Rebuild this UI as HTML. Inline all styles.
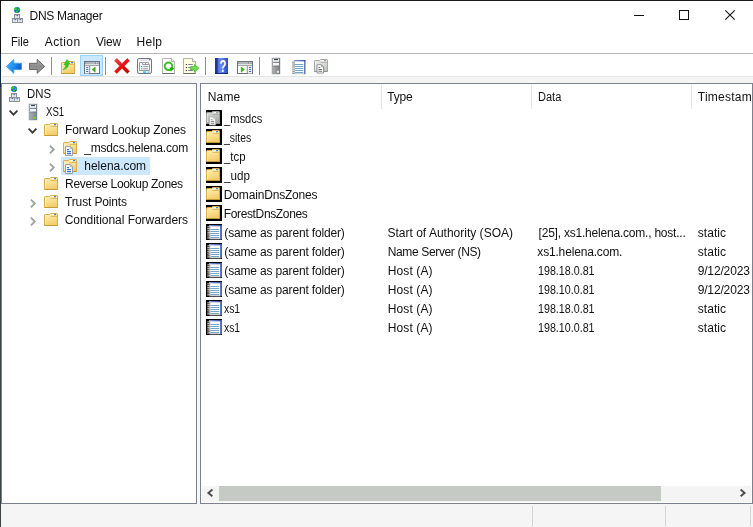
<!DOCTYPE html>
<html>
<head>
<meta charset="utf-8">
<title>DNS Manager</title>
<style>
html,body{margin:0;padding:0;}
body{width:753px;height:527px;overflow:hidden;background:#fff;position:relative;font-family:"Liberation Sans",sans-serif;font-size:12px;color:#000;}
.abs{position:absolute;}
.t{transform-origin:0 50%;position:absolute;white-space:nowrap;line-height:16px;height:16px;font-size:12px;color:#111;}
svg{position:absolute;overflow:visible;}
#edgeL{left:0;top:0;width:1px;height:527px;background:linear-gradient(#111 0,#111 54px,#0c2c48 54px,#0c2c48 87px,#3c423c 87px,#3c423c 100%);}
#edgeT{left:0;top:0;width:753px;height:1px;background:#1a1a1a;}
#menuline{left:1px;top:53px;width:752px;height:1px;background:#b4b7b4;}
#tbstrip{left:2px;top:76px;width:751px;height:7px;background:#f5f5f5;border-top:1px solid #e2e6e2;box-sizing:border-box;}
#lpane{left:1px;top:83px;width:196px;height:421px;border:1px solid #7c8190;box-sizing:border-box;background:#fff;}
#split{left:197px;top:83px;width:3px;height:421px;background:#f7f7f7;}
#rpane{left:200px;top:83px;width:553px;height:421px;border:1px solid #7c8190;box-sizing:border-box;background:#fff;}
#status{left:1px;top:504px;width:752px;height:23px;background:#f5f5f5;}
.ssep{top:506px;width:1px;height:20px;background:#d3d7d3;}
.hsep{top:85px;width:1px;height:24px;background:#e5e5e5;}
#hscroll{left:202px;top:486px;width:549px;height:16px;background:#f4f4f4;}
#thumb{left:219px;top:486px;width:442px;height:15px;background:#c6cac4;}
#sel{left:61px;top:157px;width:89px;height:18px;background:#cce8ff;}
#tbsel{left:80px;top:55px;width:23px;height:21px;background:#cce8ff;border:1px solid #99d1ff;box-sizing:border-box;}
.tsep{top:57px;width:1px;height:18px;background:#8e8e8e;}
#tx{position:absolute;left:0;top:0;width:753px;height:527px;will-change:transform;}
</style>
</head>
<body>
<div class="abs" id="menuline"></div>
<div class="abs" id="tbstrip"></div>
<div class="abs" id="lpane"></div>
<div class="abs" id="split"></div>
<div class="abs" id="rpane"></div>
<div class="abs" id="status"></div>
<div class="abs ssep" style="left:532px"></div>
<div class="abs ssep" style="left:665px"></div>
<div class="abs ssep" style="left:750px"></div>
<div class="abs" id="hscroll"></div>
<div class="abs" id="thumb"></div>
<div class="abs" id="edgeT"></div>
<div class="abs" id="edgeL"></div>
<div class="abs" id="tbsel"></div>
<div class="abs tsep" style="left:51px"></div>
<div class="abs tsep" style="left:105px"></div>
<div class="abs tsep" style="left:205px"></div>
<div class="abs tsep" style="left:259px"></div>
<div class="abs" id="sel"></div>
<div class="abs hsep" style="left:381px"></div>
<div class="abs hsep" style="left:531px"></div>
<div class="abs hsep" style="left:691px"></div>
<svg width="0" height="0" style="left:0;top:0"><defs>
<linearGradient id="gFold" x1="0" y1="0" x2="0.3" y2="1"><stop offset="0" stop-color="#fdefba"/><stop offset="0.5" stop-color="#fbe193"/><stop offset="1" stop-color="#f3cd6c"/></linearGradient>
<linearGradient id="gGFold" x1="0" y1="0" x2="0.3" y2="1"><stop offset="0" stop-color="#f0f1f0"/><stop offset="0.5" stop-color="#dcdfdc"/><stop offset="1" stop-color="#c0c4c0"/></linearGradient>
<linearGradient id="gGFold2" x1="0" y1="0" x2="0.3" y2="1"><stop offset="0" stop-color="#dcdfdc"/><stop offset="0.5" stop-color="#c2c6c2"/><stop offset="1" stop-color="#a6aaa6"/></linearGradient>
<linearGradient id="gBack" x1="0" y1="0.2" x2="1" y2="0.6"><stop offset="0" stop-color="#4cb4ff"/><stop offset="0.55" stop-color="#1c8cec"/><stop offset="1" stop-color="#0a58c0"/></linearGradient>
<linearGradient id="gFwd" x1="0" y1="0" x2="0" y2="1"><stop offset="0" stop-color="#acacac"/><stop offset="0.5" stop-color="#8c8c8c"/><stop offset="1" stop-color="#a0a0a0"/></linearGradient>
<linearGradient id="gSrv" x1="0" y1="0" x2="1" y2="0"><stop offset="0" stop-color="#a9b4bb"/><stop offset="0.5" stop-color="#8f9ca5"/><stop offset="1" stop-color="#76848e"/></linearGradient>
<linearGradient id="gSrvG" x1="0" y1="0" x2="1" y2="0"><stop offset="0" stop-color="#b4b4b4"/><stop offset="0.5" stop-color="#989898"/><stop offset="1" stop-color="#7c7c7c"/></linearGradient>
<radialGradient id="gGlobe" cx="0.4" cy="0.35" r="0.7"><stop offset="0" stop-color="#3c8cf8"/><stop offset="1" stop-color="#1030c0"/></radialGradient>
<linearGradient id="gHelp" x1="0" y1="0" x2="1" y2="0"><stop offset="0" stop-color="#3858d0"/><stop offset="0.45" stop-color="#6888ee"/><stop offset="1" stop-color="#2848c0"/></linearGradient>
<linearGradient id="gRed" x1="0" y1="0" x2="1" y2="1"><stop offset="0" stop-color="#f04848"/><stop offset="0.5" stop-color="#e81010"/><stop offset="1" stop-color="#b80000"/></linearGradient>
<linearGradient id="gNbTop" x1="0" y1="0" x2="1" y2="0"><stop offset="0" stop-color="#8098d0"/><stop offset="1" stop-color="#3450a8"/></linearGradient>
</defs></svg>
<svg style="left:12px;top:7px" width="11" height="16" viewBox="0 0 11 16" ><circle cx="5" cy="2.95" r="3" fill="url(#gGlobe)"/><path d="M2.4,1.6 Q3.4,0.1 5,0.3 Q5.4,1.6 4.4,2.6 Q3.4,3.4 2.2,3 Q2,2.2 2.4,1.6 Z" fill="#24dc24"/><path d="M6,1.4 Q7.6,1.4 7.9,3 Q7.4,4.2 6.4,3.8 Q5.6,2.6 6,1.4 Z" fill="#24dc24"/><path d="M3.6,4 Q5.2,3.4 6.2,4.6 Q5.8,5.9 4.6,5.9 Q3.6,5.4 3.6,4 Z" fill="#24dc24"/><rect x="2.5" y="7.5" width="5" height="4" fill="#fff" stroke="#8c9098" stroke-width="1"/><rect x="3" y="8" width="4" height="1.4" fill="#c8ccd4"/><rect x="4.6" y="8" width="1.2" height="1.2" fill="#3c64c0"/><rect x="3.5" y="10" width="3" height="0.7" fill="#c4c8cc"/><rect x="0.5" y="11.5" width="5" height="4" fill="#fff" stroke="#8c9098" stroke-width="1"/><rect x="1" y="12" width="4" height="1.4" fill="#c8ccd4"/><rect x="2.6" y="12" width="1.2" height="1.2" fill="#3c64c0"/><rect x="1.5" y="14" width="3" height="0.7" fill="#c4c8cc"/><rect x="5.5" y="11.5" width="5" height="4" fill="#fff" stroke="#8c9098" stroke-width="1"/><rect x="6" y="12" width="4" height="1.4" fill="#c8ccd4"/><rect x="7.6" y="12" width="1.2" height="1.2" fill="#3c64c0"/><rect x="6.5" y="14" width="3" height="0.7" fill="#c4c8cc"/></svg>
<svg style="left:9px;top:86px" width="11" height="16" viewBox="0 0 11 16" ><circle cx="5" cy="2.95" r="3" fill="url(#gGlobe)"/><path d="M2.4,1.6 Q3.4,0.1 5,0.3 Q5.4,1.6 4.4,2.6 Q3.4,3.4 2.2,3 Q2,2.2 2.4,1.6 Z" fill="#24dc24"/><path d="M6,1.4 Q7.6,1.4 7.9,3 Q7.4,4.2 6.4,3.8 Q5.6,2.6 6,1.4 Z" fill="#24dc24"/><path d="M3.6,4 Q5.2,3.4 6.2,4.6 Q5.8,5.9 4.6,5.9 Q3.6,5.4 3.6,4 Z" fill="#24dc24"/><rect x="2.5" y="7.5" width="5" height="4" fill="#fff" stroke="#8c9098" stroke-width="1"/><rect x="3" y="8" width="4" height="1.4" fill="#c8ccd4"/><rect x="4.6" y="8" width="1.2" height="1.2" fill="#3c64c0"/><rect x="3.5" y="10" width="3" height="0.7" fill="#c4c8cc"/><rect x="0.5" y="11.5" width="5" height="4" fill="#fff" stroke="#8c9098" stroke-width="1"/><rect x="1" y="12" width="4" height="1.4" fill="#c8ccd4"/><rect x="2.6" y="12" width="1.2" height="1.2" fill="#3c64c0"/><rect x="1.5" y="14" width="3" height="0.7" fill="#c4c8cc"/><rect x="5.5" y="11.5" width="5" height="4" fill="#fff" stroke="#8c9098" stroke-width="1"/><rect x="6" y="12" width="4" height="1.4" fill="#c8ccd4"/><rect x="7.6" y="12" width="1.2" height="1.2" fill="#3c64c0"/><rect x="6.5" y="14" width="3" height="0.7" fill="#c4c8cc"/></svg>
<svg style="left:634px;top:15px" width="10" height="1" viewBox="0 0 10 1" ><rect x="0" y="0" width="10" height="1" fill="#111"/></svg>
<svg style="left:679px;top:10px" width="10" height="10" viewBox="0 0 10 10" ><rect x="0.5" y="0.5" width="9" height="9" fill="none" stroke="#111" stroke-width="1"/></svg>
<svg style="left:725px;top:10px" width="10" height="10" viewBox="0 0 10 10" ><path d="M0.3,0.3 L9.7,9.7 M9.7,0.3 L0.3,9.7" stroke="#111" stroke-width="1.1" fill="none"/></svg>
<svg style="left:6px;top:59px" width="16" height="15" viewBox="0 0 16 15" ><path d="M0.4,7.4 L7.8,0.5 L7.8,4.3 L15.5,4.3 L15.5,10.5 L7.8,10.5 L7.8,14.3 Z" fill="url(#gBack)" stroke="#3c9cec" stroke-width="0.9" stroke-linejoin="round"/></svg>
<svg style="left:29px;top:59px" width="16" height="15" viewBox="0 0 16 15" ><path d="M15.6,7.4 L8.2,0.5 L8.2,4.3 L0.5,4.3 L0.5,10.5 L8.2,10.5 L8.2,14.3 Z" fill="url(#gFwd)" stroke="#5c5c5c" stroke-width="0.9" stroke-linejoin="round"/></svg>
<svg style="left:61px;top:60px" width="14" height="14" viewBox="0 0 14 14" ><g transform="translate(0,1)"><path d="M0.5,2.2 Q0.5,1.5 1.2,1.5 L5.6,1.5 L6.6,0.5 L12.8,0.5 Q13.5,0.5 13.5,1.2 L13.5,12.5 L0.5,12.5 Z" fill="url(#gFold)" stroke="#d6ad48" stroke-width="1"/><path d="M6.6,3.5 L13,3.5" stroke="#d6ad48" stroke-width="1" opacity="0.75" fill="none"/><path d="M1.5,3 L1.5,11.5" stroke="#fff" stroke-width="1" opacity="0.45" fill="none"/><path d="M0.5,12.5 L13.5,12.5" stroke="#c39a36" stroke-width="1" fill="none"/><rect x="7.7" y="1" width="2.4" height="1.2" fill="#fff"/><rect x="10.1" y="1" width="1.9" height="1.2" fill="#2c7fe0"/><path d="M1.8,8.8 Q4.8,7.4 4.9,3.4 L3,3.8 L6,-1.6 L9,2.4 L7.4,2.6 Q7.8,7.6 1.8,8.8 Z" fill="#34cc20" stroke="#1ca010" stroke-width="0.5" stroke-linejoin="round"/></g></svg>
<svg style="left:84px;top:61px" width="16" height="13" viewBox="0 0 16 13" ><rect x="0.5" y="0.5" width="15" height="12" fill="#fff" stroke="#6f747c" stroke-width="1"/><rect x="1" y="1" width="14" height="2.2" fill="#8a8f98"/><rect x="1.6" y="1.5" width="9.5" height="0.9" fill="#e4e6ea"/><rect x="12" y="1.4" width="1" height="1" fill="#fff"/><rect x="13.6" y="1.4" width="1" height="1" fill="#fff"/><rect x="1" y="3.2" width="14" height="1" fill="#dfe2e6"/><rect x="1" y="4.2" width="14" height="0.8" fill="#8a8f98"/><rect x="5.2" y="5" width="1" height="7.5" fill="#6f747c"/><rect x="1" y="5" width="4.2" height="7.5" fill="#eef0f3"/><rect x="2.2" y="6" width="2" height="1" fill="#2f6fd0"/><rect x="2.2" y="8" width="2" height="1" fill="#2f6fd0"/><rect x="2.2" y="10" width="2" height="1" fill="#2f6fd0"/><path d="M11.2,6 L8,8.6 L11.2,11.2 Z" fill="#3cb418" stroke="#2c9410" stroke-width="0.5"/></svg>
<svg style="left:114px;top:58px" width="16" height="16" viewBox="0 0 16 16" ><path d="M0.5,2.8 L2.8,0.5 L8,5.7 L13.2,0.5 L15.5,2.8 L10.3,8 L15.5,13.2 L13.2,15.5 L8,10.3 L2.8,15.5 L0.5,13.2 L5.7,8 Z" fill="url(#gRed)" stroke="#c41010" stroke-width="0.5" stroke-linejoin="round"/></svg>
<svg style="left:137px;top:58px" width="15" height="16" viewBox="0 0 15 16" ><rect x="0.5" y="0.5" width="14" height="15" rx="1.6" fill="#fff" stroke="#70757e" stroke-width="1"/><rect x="1.2" y="1.2" width="12.6" height="1.6" fill="#dfe3e8"/><rect x="12.2" y="1" width="1.2" height="1.2" fill="#3858a8"/><path d="M2.5,12.5 L2.5,4.5 L5.5,4.5 L5.5,6.5 L12.5,6.5 L12.5,12.5 Z" fill="#f4f6f8" stroke="#8a9098" stroke-width="0.9"/><path d="M5.5,4.5 L8.5,4.5 L8.5,6.5 M8.5,4.5 L11.5,4.5 L11.5,6.5" fill="none" stroke="#8a9098" stroke-width="0.8"/><rect x="4" y="8" width="1.2" height="1.2" fill="#1e90ff"/><rect x="6.2" y="8.2" width="5" height="0.9" fill="#8a9098"/><rect x="4" y="10.2" width="1.2" height="1.2" fill="#8a9098"/><rect x="6.2" y="10.4" width="5" height="0.9" fill="#8a9098"/><rect x="6" y="13.4" width="3.2" height="1.4" fill="#18b8f0"/><rect x="10.2" y="13.4" width="3" height="1.4" fill="#b4b8bc"/></svg>
<svg style="left:162px;top:58px" width="13" height="16" viewBox="0 0 13 16" ><path d="M0.5,0.5 L9.5,0.5 L12.5,3.5 L12.5,15.5 L0.5,15.5 Z" fill="#fff" stroke="#b4b4b4" stroke-width="1"/><path d="M9.5,0.5 L9.5,3.5 L12.5,3.5" fill="#f0f0f0" stroke="#9c9c9c" stroke-width="0.8"/><path d="M0.5,15.5 L12.5,15.5" stroke="#6c6c6c" stroke-width="1"/><circle cx="6.5" cy="8.3" r="3.75" fill="none" stroke="#34c41c" stroke-width="2"/><path d="M6.5,8.3 L9.4,8.6 L8,11 Z" fill="#fff"/><path d="M7.6,9.2 L12.4,10.4 L8.8,13.4 Z" fill="#18a808"/></svg>
<svg style="left:183px;top:58px" width="16" height="16" viewBox="0 0 16 16" ><path d="M0.5,0.5 L9.5,0.5 L12.5,3.5 L12.5,15.5 L0.5,15.5 Z" fill="#fffbe0" stroke="#b4b4a8" stroke-width="1"/><path d="M9.5,0.5 L9.5,3.5 L12.5,3.5" fill="#f6f6f0" stroke="#9c9c9c" stroke-width="0.8"/><path d="M0.5,15.5 L12.5,15.5" stroke="#6c6c64" stroke-width="1"/><rect x="2.8" y="6" width="1.1" height="1.1" fill="#303030"/><rect x="5.2" y="6.2" width="4.6" height="0.8" fill="#5c5c98"/><rect x="2.8" y="9" width="1.1" height="1.1" fill="#303030"/><rect x="5.2" y="9.2" width="4.6" height="0.8" fill="#5c5c98"/><rect x="2.8" y="12" width="1.1" height="1.1" fill="#303030"/><rect x="5.2" y="12.2" width="4.6" height="0.8" fill="#5c5c98"/><path d="M7.6,8.6 L11.4,8.6 L11.4,6.3 L16,10.3 L11.4,14.3 L11.4,12 L7.6,12 Z" fill="#6cdc50" stroke="#2cb01c" stroke-width="0.6"/></svg>
<svg style="left:215px;top:58px" width="13" height="16" viewBox="0 0 13 16" ><rect x="0" y="0" width="13" height="16" fill="url(#gHelp)"/><rect x="0" y="0" width="2.6" height="16" fill="#1c3494"/><rect x="0" y="15" width="13" height="1" fill="#182c84"/><text transform="translate(8,13.8) scale(0.8,1.18)" x="0" y="0" font-family="Liberation Sans, sans-serif" font-weight="bold" font-size="14" fill="#fff" text-anchor="middle">?</text></svg>
<svg style="left:237px;top:61px" width="16" height="13" viewBox="0 0 16 13" ><rect x="0.5" y="0.5" width="15" height="12" fill="#fff" stroke="#6f747c" stroke-width="1"/><rect x="1" y="1" width="14" height="2.2" fill="#8a8f98"/><rect x="1.6" y="1.5" width="9.5" height="0.9" fill="#e4e6ea"/><rect x="12" y="1.4" width="1" height="1" fill="#fff"/><rect x="13.6" y="1.4" width="1" height="1" fill="#fff"/><rect x="1" y="3.2" width="14" height="1" fill="#dfe2e6"/><rect x="1" y="4.2" width="14" height="0.8" fill="#8a8f98"/><rect x="9.8" y="5" width="1" height="7.5" fill="#6f747c"/><rect x="10.8" y="5" width="4.2" height="7.5" fill="#eef0f3"/><rect x="12" y="6" width="2" height="1" fill="#2f6fd0"/><rect x="12" y="8" width="2" height="1" fill="#2f6fd0"/><rect x="12" y="10" width="2" height="1" fill="#2f6fd0"/><path d="M4.2,6 L7.4,8.6 L4.2,11.2 Z" fill="#3cb418" stroke="#2c9410" stroke-width="0.5"/></svg>
<svg style="left:272px;top:58px" width="8" height="16" viewBox="0 0 8 16" ><rect x="0" y="0" width="8" height="16" fill="url(#gSrvG)"/><rect x="0" y="0" width="8" height="16" fill="none" stroke="#6c7a84" stroke-width="0.6" opacity="0.6"/><rect x="1" y="0.8" width="6" height="3" fill="#eef2f4"/><rect x="2" y="1.1" width="4" height="1" fill="#24343e"/><rect x="1" y="5" width="6" height="2.4" fill="#f2f5f7"/><rect x="0.5" y="4.1" width="7" height="0.6" fill="#6a7882" opacity="0.7"/><rect x="0.5" y="8" width="7" height="0.6" fill="#6a7882" opacity="0.7"/><rect x="5" y="12.8" width="2" height="2" fill="#e8e8e8"/></svg>
<svg style="left:291.2px;top:58.5px" width="16" height="16" viewBox="0 0 16 16" ><g transform="scale(0.93,1)"><g transform="translate(0,0)"><rect x="3.3" y="1" width="12.2" height="14.2" fill="#fdfdfd"/><rect x="3.3" y="1" width="12.2" height="1.3" fill="url(#gNbTop)"/><rect x="14.2" y="1" width="1.3" height="14.2" fill="#3a56a8"/><rect x="3.3" y="14.4" width="10.8" height="0.8" fill="#b8b8b8"/><rect x="4.4" y="5" width="8.8" height="1" fill="#6fa6cc"/><rect x="4.4" y="7" width="8.8" height="1" fill="#6fa6cc"/><rect x="4.4" y="9" width="8.8" height="1" fill="#6fa6cc"/><rect x="4.4" y="11" width="8.8" height="1" fill="#6fa6cc"/><rect x="4.4" y="13" width="8.8" height="1" fill="#6fa6cc"/><rect x="1.2" y="2.2" width="3.2" height="1.15" rx="0.55" fill="#bdbdbd"/><rect x="1.2" y="3.35" width="3.2" height="0.45" rx="0.2" fill="#707070"/><rect x="1.2" y="4.05" width="3.2" height="1.15" rx="0.55" fill="#bdbdbd"/><rect x="1.2" y="5.2" width="3.2" height="0.45" rx="0.2" fill="#707070"/><rect x="1.2" y="5.9" width="3.2" height="1.15" rx="0.55" fill="#bdbdbd"/><rect x="1.2" y="7.05" width="3.2" height="0.45" rx="0.2" fill="#707070"/><rect x="1.2" y="7.75" width="3.2" height="1.15" rx="0.55" fill="#bdbdbd"/><rect x="1.2" y="8.9" width="3.2" height="0.45" rx="0.2" fill="#707070"/><rect x="1.2" y="9.6" width="3.2" height="1.15" rx="0.55" fill="#bdbdbd"/><rect x="1.2" y="10.75" width="3.2" height="0.45" rx="0.2" fill="#707070"/><rect x="1.2" y="11.45" width="3.2" height="1.15" rx="0.55" fill="#bdbdbd"/><rect x="1.2" y="12.6" width="3.2" height="0.45" rx="0.2" fill="#707070"/><rect x="1.2" y="13.3" width="3.2" height="1.15" rx="0.55" fill="#bdbdbd"/><rect x="1.2" y="14.45" width="3.2" height="0.45" rx="0.2" fill="#707070"/></g></g></svg>
<svg style="left:314px;top:59px" width="15" height="15" viewBox="0 0 15 15" ><path d="M0.5,2.2 Q0.5,1.5 1.2,1.5 L5.6,1.5 L6.6,0.5 L12.8,0.5 Q13.5,0.5 13.5,1.2 L13.5,12.5 L0.5,12.5 Z" fill="url(#gGFold)" stroke="#a4a8a4" stroke-width="1"/><path d="M6.6,3.5 L13,3.5" stroke="#a4a8a4" stroke-width="1" opacity="0.75" fill="none"/><path d="M1.5,3 L1.5,11.5" stroke="#fff" stroke-width="1" opacity="0.45" fill="none"/><path d="M0.5,12.5 L13.5,12.5" stroke="#8c908c" stroke-width="1" fill="none"/><rect x="7.7" y="1" width="2.4" height="1.2" fill="#fff"/><rect x="10.1" y="1" width="1.9" height="1.2" fill="#9a9e9a"/><g transform="translate(2.6,5.3) scale(0.92,0.92)"><g transform="translate(0,0)"><path d="M0.5,0.5 L5.3,0.5 L7.5,2.7 L7.5,9.5 L0.5,9.5 Z" fill="#fff" stroke="#8c8c8c" stroke-width="1"/><path d="M5.3,0.5 L5.3,2.7 L7.5,2.7" fill="none" stroke="#8c8c8c" stroke-width="0.8"/><path d="M2,3.6 L4,3.6 M2,5.6 L6,5.6 M2,7.6 L6,7.6" stroke="#707070" stroke-width="1.1" fill="none"/></g></g></svg>
<svg style="left:9px;top:110px" width="9" height="6" viewBox="0 0 9 6" ><path d="M0.6,0.7 L4.5,4.6 L8.4,0.7" fill="none" stroke="#3c3c3c" stroke-width="1.9"/></svg>
<svg style="left:29px;top:104px" width="8" height="16" viewBox="0 0 8 16" ><rect x="0" y="0" width="8" height="16" fill="url(#gSrv)"/><rect x="0" y="0" width="8" height="16" fill="none" stroke="#6c7a84" stroke-width="0.6" opacity="0.6"/><rect x="1" y="0.8" width="6" height="3" fill="#eef2f4"/><rect x="2" y="1.1" width="4" height="1" fill="#24343e"/><rect x="1" y="5" width="6" height="2.4" fill="#f2f5f7"/><rect x="0.5" y="4.1" width="7" height="0.6" fill="#6a7882" opacity="0.7"/><rect x="0.5" y="8" width="7" height="0.6" fill="#6a7882" opacity="0.7"/><rect x="5" y="12.8" width="2" height="2" fill="#5ce018"/></svg>
<svg style="left:28px;top:128px" width="9" height="6" viewBox="0 0 9 6" ><path d="M0.6,0.7 L4.5,4.6 L8.4,0.7" fill="none" stroke="#3c3c3c" stroke-width="1.9"/></svg>
<svg style="left:44px;top:123px" width="14" height="13" viewBox="0 0 14 13" ><path d="M0.5,2.2 Q0.5,1.5 1.2,1.5 L5.6,1.5 L6.6,0.5 L12.8,0.5 Q13.5,0.5 13.5,1.2 L13.5,12.5 L0.5,12.5 Z" fill="url(#gFold)" stroke="#d6ad48" stroke-width="1"/><path d="M6.6,3.5 L13,3.5" stroke="#d6ad48" stroke-width="1" opacity="0.75" fill="none"/><path d="M1.5,3 L1.5,11.5" stroke="#fff" stroke-width="1" opacity="0.45" fill="none"/><path d="M0.5,12.5 L13.5,12.5" stroke="#c39a36" stroke-width="1" fill="none"/><rect x="7.7" y="1" width="2.4" height="1.2" fill="#fff"/><rect x="10.1" y="1" width="1.9" height="1.2" fill="#2c7fe0"/></svg>
<svg style="left:49px;top:145px" width="6" height="9" viewBox="0 0 6 9" ><path d="M0.9,0.6 L4.8,4.5 L0.9,8.4" fill="none" stroke="#a0a4a0" stroke-width="1.9"/></svg>
<svg style="left:63px;top:141px" width="14" height="15" viewBox="0 0 14 15" ><path d="M0.5,2.2 Q0.5,1.5 1.2,1.5 L5.6,1.5 L6.6,0.5 L12.8,0.5 Q13.5,0.5 13.5,1.2 L13.5,12.5 L0.5,12.5 Z" fill="url(#gFold)" stroke="#d6ad48" stroke-width="1"/><path d="M6.6,3.5 L13,3.5" stroke="#d6ad48" stroke-width="1" opacity="0.75" fill="none"/><path d="M1.5,3 L1.5,11.5" stroke="#fff" stroke-width="1" opacity="0.45" fill="none"/><path d="M0.5,12.5 L13.5,12.5" stroke="#c39a36" stroke-width="1" fill="none"/><rect x="7.7" y="1" width="2.4" height="1.2" fill="#fff"/><rect x="10.1" y="1" width="1.9" height="1.2" fill="#2c7fe0"/><g transform="translate(2,5)"><path d="M0.5,0.5 L5.3,0.5 L7.5,2.7 L7.5,9.5 L0.5,9.5 Z" fill="#fff" stroke="#9a9ea6" stroke-width="1"/><path d="M5.3,0.5 L5.3,2.7 L7.5,2.7" fill="none" stroke="#9a9ea6" stroke-width="0.8"/><path d="M2,3.6 L4,3.6 M2,5.6 L6,5.6 M2,7.6 L6,7.6" stroke="#2f78d8" stroke-width="1.1" fill="none"/></g></svg>
<svg style="left:49px;top:163px" width="6" height="9" viewBox="0 0 6 9" ><path d="M0.9,0.6 L4.8,4.5 L0.9,8.4" fill="none" stroke="#a0a4a0" stroke-width="1.9"/></svg>
<svg style="left:63px;top:159px" width="14" height="15" viewBox="0 0 14 15" ><path d="M0.5,2.2 Q0.5,1.5 1.2,1.5 L5.6,1.5 L6.6,0.5 L12.8,0.5 Q13.5,0.5 13.5,1.2 L13.5,12.5 L0.5,12.5 Z" fill="url(#gFold)" stroke="#d6ad48" stroke-width="1"/><path d="M6.6,3.5 L13,3.5" stroke="#d6ad48" stroke-width="1" opacity="0.75" fill="none"/><path d="M1.5,3 L1.5,11.5" stroke="#fff" stroke-width="1" opacity="0.45" fill="none"/><path d="M0.5,12.5 L13.5,12.5" stroke="#c39a36" stroke-width="1" fill="none"/><rect x="7.7" y="1" width="2.4" height="1.2" fill="#fff"/><rect x="10.1" y="1" width="1.9" height="1.2" fill="#2c7fe0"/><g transform="translate(2,5)"><path d="M0.5,0.5 L5.3,0.5 L7.5,2.7 L7.5,9.5 L0.5,9.5 Z" fill="#fff" stroke="#9a9ea6" stroke-width="1"/><path d="M5.3,0.5 L5.3,2.7 L7.5,2.7" fill="none" stroke="#9a9ea6" stroke-width="0.8"/><path d="M2,3.6 L4,3.6 M2,5.6 L6,5.6 M2,7.6 L6,7.6" stroke="#2f78d8" stroke-width="1.1" fill="none"/></g></svg>
<svg style="left:44px;top:177px" width="14" height="13" viewBox="0 0 14 13" ><path d="M0.5,2.2 Q0.5,1.5 1.2,1.5 L5.6,1.5 L6.6,0.5 L12.8,0.5 Q13.5,0.5 13.5,1.2 L13.5,12.5 L0.5,12.5 Z" fill="url(#gFold)" stroke="#d6ad48" stroke-width="1"/><path d="M6.6,3.5 L13,3.5" stroke="#d6ad48" stroke-width="1" opacity="0.75" fill="none"/><path d="M1.5,3 L1.5,11.5" stroke="#fff" stroke-width="1" opacity="0.45" fill="none"/><path d="M0.5,12.5 L13.5,12.5" stroke="#c39a36" stroke-width="1" fill="none"/><rect x="7.7" y="1" width="2.4" height="1.2" fill="#fff"/><rect x="10.1" y="1" width="1.9" height="1.2" fill="#2c7fe0"/></svg>
<svg style="left:30px;top:199px" width="6" height="9" viewBox="0 0 6 9" ><path d="M0.9,0.6 L4.8,4.5 L0.9,8.4" fill="none" stroke="#a0a4a0" stroke-width="1.9"/></svg>
<svg style="left:44px;top:195px" width="14" height="13" viewBox="0 0 14 13" ><path d="M0.5,2.2 Q0.5,1.5 1.2,1.5 L5.6,1.5 L6.6,0.5 L12.8,0.5 Q13.5,0.5 13.5,1.2 L13.5,12.5 L0.5,12.5 Z" fill="url(#gFold)" stroke="#d6ad48" stroke-width="1"/><path d="M6.6,3.5 L13,3.5" stroke="#d6ad48" stroke-width="1" opacity="0.75" fill="none"/><path d="M1.5,3 L1.5,11.5" stroke="#fff" stroke-width="1" opacity="0.45" fill="none"/><path d="M0.5,12.5 L13.5,12.5" stroke="#c39a36" stroke-width="1" fill="none"/><rect x="7.7" y="1" width="2.4" height="1.2" fill="#fff"/><rect x="10.1" y="1" width="1.9" height="1.2" fill="#2c7fe0"/></svg>
<svg style="left:30px;top:217px" width="6" height="9" viewBox="0 0 6 9" ><path d="M0.9,0.6 L4.8,4.5 L0.9,8.4" fill="none" stroke="#a0a4a0" stroke-width="1.9"/></svg>
<svg style="left:44px;top:213px" width="14" height="13" viewBox="0 0 14 13" ><path d="M0.5,2.2 Q0.5,1.5 1.2,1.5 L5.6,1.5 L6.6,0.5 L12.8,0.5 Q13.5,0.5 13.5,1.2 L13.5,12.5 L0.5,12.5 Z" fill="url(#gFold)" stroke="#d6ad48" stroke-width="1"/><path d="M6.6,3.5 L13,3.5" stroke="#d6ad48" stroke-width="1" opacity="0.75" fill="none"/><path d="M1.5,3 L1.5,11.5" stroke="#fff" stroke-width="1" opacity="0.45" fill="none"/><path d="M0.5,12.5 L13.5,12.5" stroke="#c39a36" stroke-width="1" fill="none"/><rect x="7.7" y="1" width="2.4" height="1.2" fill="#fff"/><rect x="10.1" y="1" width="1.9" height="1.2" fill="#2c7fe0"/></svg>
<svg style="left:206px;top:110px" width="16" height="16" viewBox="0 0 16 16" ><rect x="0" y="0" width="16" height="16" fill="#000"/><g transform="translate(0,1)"><path d="M0.5,2.2 Q0.5,1.5 1.2,1.5 L5.6,1.5 L6.6,0.5 L12.8,0.5 Q13.5,0.5 13.5,1.2 L13.5,12.5 L0.5,12.5 Z" fill="url(#gGFold2)" stroke="#a0a4a0" stroke-width="1"/><path d="M6.6,3.5 L13,3.5" stroke="#a0a4a0" stroke-width="1" opacity="0.75" fill="none"/><path d="M1.5,3 L1.5,11.5" stroke="#fff" stroke-width="1" opacity="0.45" fill="none"/><path d="M0.5,12.5 L13.5,12.5" stroke="#8c908c" stroke-width="1" fill="none"/><rect x="7.7" y="1" width="2.4" height="1.2" fill="#fff"/><rect x="10.1" y="1" width="1.9" height="1.2" fill="#9a9e9a"/></g><g transform="translate(3,6.6) scale(0.88,0.88)"><g transform="translate(0,0)"><path d="M0.5,0.5 L5.3,0.5 L7.5,2.7 L7.5,9.5 L0.5,9.5 Z" fill="#fff" stroke="#b4b4b4" stroke-width="1"/><path d="M5.3,0.5 L5.3,2.7 L7.5,2.7" fill="none" stroke="#b4b4b4" stroke-width="0.8"/><path d="M2,3.6 L4,3.6 M2,5.6 L6,5.6 M2,7.6 L6,7.6" stroke="#7c7c7c" stroke-width="1.1" fill="none"/></g></g></svg>
<svg style="left:206px;top:129px" width="16" height="16" viewBox="0 0 16 16" ><rect x="0" y="0" width="16" height="16" fill="#000"/><g transform="translate(0,1)"><path d="M0.5,2.2 Q0.5,1.5 1.2,1.5 L5.6,1.5 L6.6,0.5 L12.8,0.5 Q13.5,0.5 13.5,1.2 L13.5,12.5 L0.5,12.5 Z" fill="url(#gFold)" stroke="#d6ad48" stroke-width="1"/><path d="M6.6,3.5 L13,3.5" stroke="#d6ad48" stroke-width="1" opacity="0.75" fill="none"/><path d="M1.5,3 L1.5,11.5" stroke="#fff" stroke-width="1" opacity="0.45" fill="none"/><path d="M0.5,12.5 L13.5,12.5" stroke="#c39a36" stroke-width="1" fill="none"/><rect x="7.7" y="1" width="2.4" height="1.2" fill="#fff"/><rect x="10.1" y="1" width="1.9" height="1.2" fill="#2c7fe0"/></g></svg>
<svg style="left:206px;top:148px" width="16" height="16" viewBox="0 0 16 16" ><rect x="0" y="0" width="16" height="16" fill="#000"/><g transform="translate(0,1)"><path d="M0.5,2.2 Q0.5,1.5 1.2,1.5 L5.6,1.5 L6.6,0.5 L12.8,0.5 Q13.5,0.5 13.5,1.2 L13.5,12.5 L0.5,12.5 Z" fill="url(#gFold)" stroke="#d6ad48" stroke-width="1"/><path d="M6.6,3.5 L13,3.5" stroke="#d6ad48" stroke-width="1" opacity="0.75" fill="none"/><path d="M1.5,3 L1.5,11.5" stroke="#fff" stroke-width="1" opacity="0.45" fill="none"/><path d="M0.5,12.5 L13.5,12.5" stroke="#c39a36" stroke-width="1" fill="none"/><rect x="7.7" y="1" width="2.4" height="1.2" fill="#fff"/><rect x="10.1" y="1" width="1.9" height="1.2" fill="#2c7fe0"/></g></svg>
<svg style="left:206px;top:167px" width="16" height="16" viewBox="0 0 16 16" ><rect x="0" y="0" width="16" height="16" fill="#000"/><g transform="translate(0,1)"><path d="M0.5,2.2 Q0.5,1.5 1.2,1.5 L5.6,1.5 L6.6,0.5 L12.8,0.5 Q13.5,0.5 13.5,1.2 L13.5,12.5 L0.5,12.5 Z" fill="url(#gFold)" stroke="#d6ad48" stroke-width="1"/><path d="M6.6,3.5 L13,3.5" stroke="#d6ad48" stroke-width="1" opacity="0.75" fill="none"/><path d="M1.5,3 L1.5,11.5" stroke="#fff" stroke-width="1" opacity="0.45" fill="none"/><path d="M0.5,12.5 L13.5,12.5" stroke="#c39a36" stroke-width="1" fill="none"/><rect x="7.7" y="1" width="2.4" height="1.2" fill="#fff"/><rect x="10.1" y="1" width="1.9" height="1.2" fill="#2c7fe0"/></g></svg>
<svg style="left:206px;top:186px" width="16" height="16" viewBox="0 0 16 16" ><rect x="0" y="0" width="16" height="16" fill="#000"/><g transform="translate(0,1)"><path d="M0.5,2.2 Q0.5,1.5 1.2,1.5 L5.6,1.5 L6.6,0.5 L12.8,0.5 Q13.5,0.5 13.5,1.2 L13.5,12.5 L0.5,12.5 Z" fill="url(#gFold)" stroke="#d6ad48" stroke-width="1"/><path d="M6.6,3.5 L13,3.5" stroke="#d6ad48" stroke-width="1" opacity="0.75" fill="none"/><path d="M1.5,3 L1.5,11.5" stroke="#fff" stroke-width="1" opacity="0.45" fill="none"/><path d="M0.5,12.5 L13.5,12.5" stroke="#c39a36" stroke-width="1" fill="none"/><rect x="7.7" y="1" width="2.4" height="1.2" fill="#fff"/><rect x="10.1" y="1" width="1.9" height="1.2" fill="#2c7fe0"/></g></svg>
<svg style="left:206px;top:205px" width="16" height="16" viewBox="0 0 16 16" ><rect x="0" y="0" width="16" height="16" fill="#000"/><g transform="translate(0,1)"><path d="M0.5,2.2 Q0.5,1.5 1.2,1.5 L5.6,1.5 L6.6,0.5 L12.8,0.5 Q13.5,0.5 13.5,1.2 L13.5,12.5 L0.5,12.5 Z" fill="url(#gFold)" stroke="#d6ad48" stroke-width="1"/><path d="M6.6,3.5 L13,3.5" stroke="#d6ad48" stroke-width="1" opacity="0.75" fill="none"/><path d="M1.5,3 L1.5,11.5" stroke="#fff" stroke-width="1" opacity="0.45" fill="none"/><path d="M0.5,12.5 L13.5,12.5" stroke="#c39a36" stroke-width="1" fill="none"/><rect x="7.7" y="1" width="2.4" height="1.2" fill="#fff"/><rect x="10.1" y="1" width="1.9" height="1.2" fill="#2c7fe0"/></g></svg>
<svg style="left:206px;top:224px" width="16" height="16" viewBox="0 0 16 16" ><rect x="0" y="0" width="16" height="16" fill="#000"/><g transform="translate(0,0)"><rect x="3.3" y="1" width="12.2" height="14.2" fill="#fdfdfd"/><rect x="3.3" y="1" width="12.2" height="1.3" fill="url(#gNbTop)"/><rect x="14.2" y="1" width="1.3" height="14.2" fill="#3a56a8"/><rect x="3.3" y="14.4" width="10.8" height="0.8" fill="#b8b8b8"/><rect x="4.4" y="5" width="8.8" height="1" fill="#6fa6cc"/><rect x="4.4" y="7" width="8.8" height="1" fill="#6fa6cc"/><rect x="4.4" y="9" width="8.8" height="1" fill="#6fa6cc"/><rect x="4.4" y="11" width="8.8" height="1" fill="#6fa6cc"/><rect x="4.4" y="13" width="8.8" height="1" fill="#6fa6cc"/><rect x="1.2" y="2.2" width="3.2" height="1.15" rx="0.55" fill="#bdbdbd"/><rect x="1.2" y="3.35" width="3.2" height="0.45" rx="0.2" fill="#707070"/><rect x="1.2" y="4.05" width="3.2" height="1.15" rx="0.55" fill="#bdbdbd"/><rect x="1.2" y="5.2" width="3.2" height="0.45" rx="0.2" fill="#707070"/><rect x="1.2" y="5.9" width="3.2" height="1.15" rx="0.55" fill="#bdbdbd"/><rect x="1.2" y="7.05" width="3.2" height="0.45" rx="0.2" fill="#707070"/><rect x="1.2" y="7.75" width="3.2" height="1.15" rx="0.55" fill="#bdbdbd"/><rect x="1.2" y="8.9" width="3.2" height="0.45" rx="0.2" fill="#707070"/><rect x="1.2" y="9.6" width="3.2" height="1.15" rx="0.55" fill="#bdbdbd"/><rect x="1.2" y="10.75" width="3.2" height="0.45" rx="0.2" fill="#707070"/><rect x="1.2" y="11.45" width="3.2" height="1.15" rx="0.55" fill="#bdbdbd"/><rect x="1.2" y="12.6" width="3.2" height="0.45" rx="0.2" fill="#707070"/><rect x="1.2" y="13.3" width="3.2" height="1.15" rx="0.55" fill="#bdbdbd"/><rect x="1.2" y="14.45" width="3.2" height="0.45" rx="0.2" fill="#707070"/></g></svg>
<svg style="left:206px;top:243px" width="16" height="16" viewBox="0 0 16 16" ><rect x="0" y="0" width="16" height="16" fill="#000"/><g transform="translate(0,0)"><rect x="3.3" y="1" width="12.2" height="14.2" fill="#fdfdfd"/><rect x="3.3" y="1" width="12.2" height="1.3" fill="url(#gNbTop)"/><rect x="14.2" y="1" width="1.3" height="14.2" fill="#3a56a8"/><rect x="3.3" y="14.4" width="10.8" height="0.8" fill="#b8b8b8"/><rect x="4.4" y="5" width="8.8" height="1" fill="#6fa6cc"/><rect x="4.4" y="7" width="8.8" height="1" fill="#6fa6cc"/><rect x="4.4" y="9" width="8.8" height="1" fill="#6fa6cc"/><rect x="4.4" y="11" width="8.8" height="1" fill="#6fa6cc"/><rect x="4.4" y="13" width="8.8" height="1" fill="#6fa6cc"/><rect x="1.2" y="2.2" width="3.2" height="1.15" rx="0.55" fill="#bdbdbd"/><rect x="1.2" y="3.35" width="3.2" height="0.45" rx="0.2" fill="#707070"/><rect x="1.2" y="4.05" width="3.2" height="1.15" rx="0.55" fill="#bdbdbd"/><rect x="1.2" y="5.2" width="3.2" height="0.45" rx="0.2" fill="#707070"/><rect x="1.2" y="5.9" width="3.2" height="1.15" rx="0.55" fill="#bdbdbd"/><rect x="1.2" y="7.05" width="3.2" height="0.45" rx="0.2" fill="#707070"/><rect x="1.2" y="7.75" width="3.2" height="1.15" rx="0.55" fill="#bdbdbd"/><rect x="1.2" y="8.9" width="3.2" height="0.45" rx="0.2" fill="#707070"/><rect x="1.2" y="9.6" width="3.2" height="1.15" rx="0.55" fill="#bdbdbd"/><rect x="1.2" y="10.75" width="3.2" height="0.45" rx="0.2" fill="#707070"/><rect x="1.2" y="11.45" width="3.2" height="1.15" rx="0.55" fill="#bdbdbd"/><rect x="1.2" y="12.6" width="3.2" height="0.45" rx="0.2" fill="#707070"/><rect x="1.2" y="13.3" width="3.2" height="1.15" rx="0.55" fill="#bdbdbd"/><rect x="1.2" y="14.45" width="3.2" height="0.45" rx="0.2" fill="#707070"/></g></svg>
<svg style="left:206px;top:262px" width="16" height="16" viewBox="0 0 16 16" ><rect x="0" y="0" width="16" height="16" fill="#000"/><g transform="translate(0,0)"><rect x="3.3" y="1" width="12.2" height="14.2" fill="#fdfdfd"/><rect x="3.3" y="1" width="12.2" height="1.3" fill="url(#gNbTop)"/><rect x="14.2" y="1" width="1.3" height="14.2" fill="#3a56a8"/><rect x="3.3" y="14.4" width="10.8" height="0.8" fill="#b8b8b8"/><rect x="4.4" y="5" width="8.8" height="1" fill="#6fa6cc"/><rect x="4.4" y="7" width="8.8" height="1" fill="#6fa6cc"/><rect x="4.4" y="9" width="8.8" height="1" fill="#6fa6cc"/><rect x="4.4" y="11" width="8.8" height="1" fill="#6fa6cc"/><rect x="4.4" y="13" width="8.8" height="1" fill="#6fa6cc"/><rect x="1.2" y="2.2" width="3.2" height="1.15" rx="0.55" fill="#bdbdbd"/><rect x="1.2" y="3.35" width="3.2" height="0.45" rx="0.2" fill="#707070"/><rect x="1.2" y="4.05" width="3.2" height="1.15" rx="0.55" fill="#bdbdbd"/><rect x="1.2" y="5.2" width="3.2" height="0.45" rx="0.2" fill="#707070"/><rect x="1.2" y="5.9" width="3.2" height="1.15" rx="0.55" fill="#bdbdbd"/><rect x="1.2" y="7.05" width="3.2" height="0.45" rx="0.2" fill="#707070"/><rect x="1.2" y="7.75" width="3.2" height="1.15" rx="0.55" fill="#bdbdbd"/><rect x="1.2" y="8.9" width="3.2" height="0.45" rx="0.2" fill="#707070"/><rect x="1.2" y="9.6" width="3.2" height="1.15" rx="0.55" fill="#bdbdbd"/><rect x="1.2" y="10.75" width="3.2" height="0.45" rx="0.2" fill="#707070"/><rect x="1.2" y="11.45" width="3.2" height="1.15" rx="0.55" fill="#bdbdbd"/><rect x="1.2" y="12.6" width="3.2" height="0.45" rx="0.2" fill="#707070"/><rect x="1.2" y="13.3" width="3.2" height="1.15" rx="0.55" fill="#bdbdbd"/><rect x="1.2" y="14.45" width="3.2" height="0.45" rx="0.2" fill="#707070"/></g></svg>
<svg style="left:206px;top:281px" width="16" height="16" viewBox="0 0 16 16" ><rect x="0" y="0" width="16" height="16" fill="#000"/><g transform="translate(0,0)"><rect x="3.3" y="1" width="12.2" height="14.2" fill="#fdfdfd"/><rect x="3.3" y="1" width="12.2" height="1.3" fill="url(#gNbTop)"/><rect x="14.2" y="1" width="1.3" height="14.2" fill="#3a56a8"/><rect x="3.3" y="14.4" width="10.8" height="0.8" fill="#b8b8b8"/><rect x="4.4" y="5" width="8.8" height="1" fill="#6fa6cc"/><rect x="4.4" y="7" width="8.8" height="1" fill="#6fa6cc"/><rect x="4.4" y="9" width="8.8" height="1" fill="#6fa6cc"/><rect x="4.4" y="11" width="8.8" height="1" fill="#6fa6cc"/><rect x="4.4" y="13" width="8.8" height="1" fill="#6fa6cc"/><rect x="1.2" y="2.2" width="3.2" height="1.15" rx="0.55" fill="#bdbdbd"/><rect x="1.2" y="3.35" width="3.2" height="0.45" rx="0.2" fill="#707070"/><rect x="1.2" y="4.05" width="3.2" height="1.15" rx="0.55" fill="#bdbdbd"/><rect x="1.2" y="5.2" width="3.2" height="0.45" rx="0.2" fill="#707070"/><rect x="1.2" y="5.9" width="3.2" height="1.15" rx="0.55" fill="#bdbdbd"/><rect x="1.2" y="7.05" width="3.2" height="0.45" rx="0.2" fill="#707070"/><rect x="1.2" y="7.75" width="3.2" height="1.15" rx="0.55" fill="#bdbdbd"/><rect x="1.2" y="8.9" width="3.2" height="0.45" rx="0.2" fill="#707070"/><rect x="1.2" y="9.6" width="3.2" height="1.15" rx="0.55" fill="#bdbdbd"/><rect x="1.2" y="10.75" width="3.2" height="0.45" rx="0.2" fill="#707070"/><rect x="1.2" y="11.45" width="3.2" height="1.15" rx="0.55" fill="#bdbdbd"/><rect x="1.2" y="12.6" width="3.2" height="0.45" rx="0.2" fill="#707070"/><rect x="1.2" y="13.3" width="3.2" height="1.15" rx="0.55" fill="#bdbdbd"/><rect x="1.2" y="14.45" width="3.2" height="0.45" rx="0.2" fill="#707070"/></g></svg>
<svg style="left:206px;top:300px" width="16" height="16" viewBox="0 0 16 16" ><rect x="0" y="0" width="16" height="16" fill="#000"/><g transform="translate(0,0)"><rect x="3.3" y="1" width="12.2" height="14.2" fill="#fdfdfd"/><rect x="3.3" y="1" width="12.2" height="1.3" fill="url(#gNbTop)"/><rect x="14.2" y="1" width="1.3" height="14.2" fill="#3a56a8"/><rect x="3.3" y="14.4" width="10.8" height="0.8" fill="#b8b8b8"/><rect x="4.4" y="5" width="8.8" height="1" fill="#6fa6cc"/><rect x="4.4" y="7" width="8.8" height="1" fill="#6fa6cc"/><rect x="4.4" y="9" width="8.8" height="1" fill="#6fa6cc"/><rect x="4.4" y="11" width="8.8" height="1" fill="#6fa6cc"/><rect x="4.4" y="13" width="8.8" height="1" fill="#6fa6cc"/><rect x="1.2" y="2.2" width="3.2" height="1.15" rx="0.55" fill="#bdbdbd"/><rect x="1.2" y="3.35" width="3.2" height="0.45" rx="0.2" fill="#707070"/><rect x="1.2" y="4.05" width="3.2" height="1.15" rx="0.55" fill="#bdbdbd"/><rect x="1.2" y="5.2" width="3.2" height="0.45" rx="0.2" fill="#707070"/><rect x="1.2" y="5.9" width="3.2" height="1.15" rx="0.55" fill="#bdbdbd"/><rect x="1.2" y="7.05" width="3.2" height="0.45" rx="0.2" fill="#707070"/><rect x="1.2" y="7.75" width="3.2" height="1.15" rx="0.55" fill="#bdbdbd"/><rect x="1.2" y="8.9" width="3.2" height="0.45" rx="0.2" fill="#707070"/><rect x="1.2" y="9.6" width="3.2" height="1.15" rx="0.55" fill="#bdbdbd"/><rect x="1.2" y="10.75" width="3.2" height="0.45" rx="0.2" fill="#707070"/><rect x="1.2" y="11.45" width="3.2" height="1.15" rx="0.55" fill="#bdbdbd"/><rect x="1.2" y="12.6" width="3.2" height="0.45" rx="0.2" fill="#707070"/><rect x="1.2" y="13.3" width="3.2" height="1.15" rx="0.55" fill="#bdbdbd"/><rect x="1.2" y="14.45" width="3.2" height="0.45" rx="0.2" fill="#707070"/></g></svg>
<svg style="left:206px;top:319px" width="16" height="16" viewBox="0 0 16 16" ><rect x="0" y="0" width="16" height="16" fill="#000"/><g transform="translate(0,0)"><rect x="3.3" y="1" width="12.2" height="14.2" fill="#fdfdfd"/><rect x="3.3" y="1" width="12.2" height="1.3" fill="url(#gNbTop)"/><rect x="14.2" y="1" width="1.3" height="14.2" fill="#3a56a8"/><rect x="3.3" y="14.4" width="10.8" height="0.8" fill="#b8b8b8"/><rect x="4.4" y="5" width="8.8" height="1" fill="#6fa6cc"/><rect x="4.4" y="7" width="8.8" height="1" fill="#6fa6cc"/><rect x="4.4" y="9" width="8.8" height="1" fill="#6fa6cc"/><rect x="4.4" y="11" width="8.8" height="1" fill="#6fa6cc"/><rect x="4.4" y="13" width="8.8" height="1" fill="#6fa6cc"/><rect x="1.2" y="2.2" width="3.2" height="1.15" rx="0.55" fill="#bdbdbd"/><rect x="1.2" y="3.35" width="3.2" height="0.45" rx="0.2" fill="#707070"/><rect x="1.2" y="4.05" width="3.2" height="1.15" rx="0.55" fill="#bdbdbd"/><rect x="1.2" y="5.2" width="3.2" height="0.45" rx="0.2" fill="#707070"/><rect x="1.2" y="5.9" width="3.2" height="1.15" rx="0.55" fill="#bdbdbd"/><rect x="1.2" y="7.05" width="3.2" height="0.45" rx="0.2" fill="#707070"/><rect x="1.2" y="7.75" width="3.2" height="1.15" rx="0.55" fill="#bdbdbd"/><rect x="1.2" y="8.9" width="3.2" height="0.45" rx="0.2" fill="#707070"/><rect x="1.2" y="9.6" width="3.2" height="1.15" rx="0.55" fill="#bdbdbd"/><rect x="1.2" y="10.75" width="3.2" height="0.45" rx="0.2" fill="#707070"/><rect x="1.2" y="11.45" width="3.2" height="1.15" rx="0.55" fill="#bdbdbd"/><rect x="1.2" y="12.6" width="3.2" height="0.45" rx="0.2" fill="#707070"/><rect x="1.2" y="13.3" width="3.2" height="1.15" rx="0.55" fill="#bdbdbd"/><rect x="1.2" y="14.45" width="3.2" height="0.45" rx="0.2" fill="#707070"/></g></svg>
<svg style="left:206.5px;top:489.3px" width="6" height="8" viewBox="0 0 6 8" ><path d="M5.4,0.6 L1.4,3.9 L5.4,7.2" fill="none" stroke="#4c4c4c" stroke-width="1.9"/></svg>
<svg style="left:740px;top:489.3px" width="6" height="8" viewBox="0 0 6 8" ><path d="M0.6,0.6 L4.6,3.9 L0.6,7.2" fill="none" stroke="#4c4c4c" stroke-width="1.9"/></svg>
<div id="tx">
<div class="t" id="t0" style="left:29.55px;top:8px;letter-spacing:-0.295px">DNS Manager</div>
<div class="t" id="t1" style="left:11.17px;top:34px;transform:scaleX(0.9271)">File</div>
<div class="t" id="t2" style="left:44.80px;top:34px;letter-spacing:0.391px">Action</div>
<div class="t" id="t3" style="left:95.93px;top:34px;letter-spacing:-0.183px">View</div>
<div class="t" id="t4" style="left:136.55px;top:34px;letter-spacing:0.246px">Help</div>
<div class="t" id="t5" style="left:26.64px;top:86px;transform:scaleX(0.9497)">DNS</div>
<div class="t" id="t6" style="left:45.57px;top:104px;transform:scaleX(0.8001)">XS1</div>
<div class="t" id="t7" style="left:65.04px;top:122px;letter-spacing:-0.123px">Forward Lookup Zones</div>
<div class="t" id="t8" style="left:84.13px;top:140px;letter-spacing:-0.159px">_msdcs.helena.com</div>
<div class="t" id="t9" style="left:84.30px;top:158px;letter-spacing:-0.024px">helena.com</div>
<div class="t" id="t10" style="left:65.04px;top:176px;letter-spacing:-0.315px">Reverse Lookup Zones</div>
<div class="t" id="t11" style="left:65.01px;top:194px;letter-spacing:-0.137px">Trust Points</div>
<div class="t" id="t12" style="left:64.66px;top:212px;letter-spacing:-0.033px">Conditional Forwarders</div>
<div class="t" id="t13" style="left:207.71px;top:89px;letter-spacing:0.195px">Name</div>
<div class="t" id="t14" style="left:387.28px;top:89px;letter-spacing:-0.212px">Type</div>
<div class="t" id="t15" style="left:537.70px;top:89px;transform:scaleX(0.9191)">Data</div>
<div class="t" id="t16" style="left:697.85px;top:89px;letter-spacing:0.235px">Timestam</div>
<div class="t" id="t17" style="left:224.19px;top:111px;transform:scaleX(0.9292)">_msdcs</div>
<div class="t" id="t18" style="left:224.19px;top:130px;transform:scaleX(0.8696)">_sites</div>
<div class="t" id="t19" style="left:224.19px;top:149px;transform:scaleX(0.9462)">_tcp</div>
<div class="t" id="t20" style="left:224.29px;top:168px;transform:scaleX(0.9695)">_udp</div>
<div class="t" id="t21" style="left:223.83px;top:187px;letter-spacing:-0.174px">DomainDnsZones</div>
<div class="t" id="t22" style="left:223.71px;top:206px;letter-spacing:-0.356px">ForestDnsZones</div>
<div class="t" id="t23" style="left:224.30px;top:225px;letter-spacing:-0.160px">(same as parent folder)</div>
<div class="t" id="t24" style="left:224.30px;top:244px;letter-spacing:-0.160px">(same as parent folder)</div>
<div class="t" id="t25" style="left:224.30px;top:263px;letter-spacing:-0.160px">(same as parent folder)</div>
<div class="t" id="t26" style="left:224.30px;top:282px;letter-spacing:-0.160px">(same as parent folder)</div>
<div class="t" id="t27" style="left:223.89px;top:301px;transform:scaleX(0.8643)">xs1</div>
<div class="t" id="t28" style="left:223.89px;top:320px;transform:scaleX(0.8643)">xs1</div>
<div class="t" id="t29" style="left:387.49px;top:225px;letter-spacing:0.005px">Start of Authority (SOA)</div>
<div class="t" id="t30" style="left:538.56px;top:225px;letter-spacing:-0.212px">[25], xs1.helena.com., host...</div>
<div class="t" id="t31" style="left:697.70px;top:225px;letter-spacing:0.075px">static</div>
<div class="t" id="t32" style="left:387.71px;top:244px;letter-spacing:-0.353px">Name Server (NS)</div>
<div class="t" id="t33" style="left:537.30px;top:244px;letter-spacing:-0.170px">xs1.helena.com.</div>
<div class="t" id="t34" style="left:697.70px;top:244px;letter-spacing:0.075px">static</div>
<div class="t" id="t35" style="left:387.71px;top:263px;letter-spacing:0.112px">Host (A)</div>
<div class="t" id="t36" style="left:537.82px;top:263px;transform:scaleX(0.8918)">198.18.0.81</div>
<div class="t" id="t37" style="left:697.66px;top:263px;letter-spacing:-0.147px">9/12/2023</div>
<div class="t" id="t38" style="left:387.71px;top:282px;letter-spacing:0.112px">Host (A)</div>
<div class="t" id="t39" style="left:537.82px;top:282px;transform:scaleX(0.8918)">198.10.0.81</div>
<div class="t" id="t40" style="left:697.66px;top:282px;letter-spacing:-0.147px">9/12/2023</div>
<div class="t" id="t41" style="left:387.71px;top:301px;letter-spacing:0.112px">Host (A)</div>
<div class="t" id="t42" style="left:537.82px;top:301px;transform:scaleX(0.8918)">198.18.0.81</div>
<div class="t" id="t43" style="left:697.70px;top:301px;letter-spacing:0.075px">static</div>
<div class="t" id="t44" style="left:387.71px;top:320px;letter-spacing:0.112px">Host (A)</div>
<div class="t" id="t45" style="left:537.82px;top:320px;transform:scaleX(0.8918)">198.10.0.81</div>
<div class="t" id="t46" style="left:697.70px;top:320px;letter-spacing:0.075px">static</div>
</div>

</body>
</html>
